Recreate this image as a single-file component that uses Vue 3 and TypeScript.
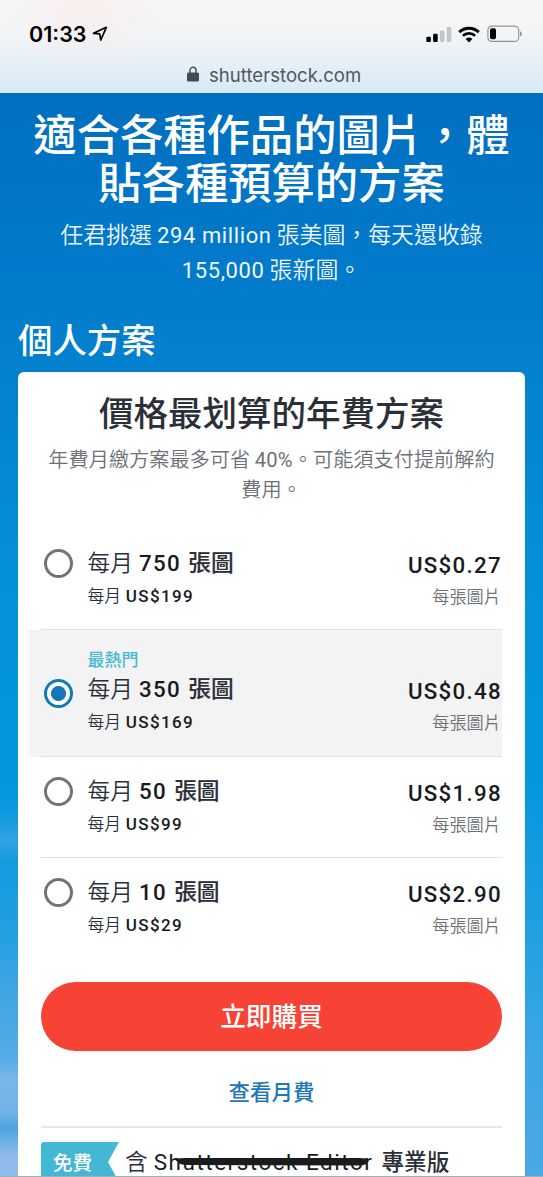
<script setup lang="ts">
interface Plan {
  images: string
  monthly: string
  perImage: string
  popular?: boolean
}

const plans: Plan[] = [
  { images: '750', monthly: 'US$199', perImage: 'US$0.27' },
  { images: '350', monthly: 'US$169', perImage: 'US$0.48', popular: true },
  { images: '50', monthly: 'US$99', perImage: 'US$1.98' },
  { images: '10', monthly: 'US$29', perImage: 'US$2.90' },
]
</script>

<template>
  <div class="screen">
    <header class="browser">
      <div class="status">
        <span class="clock">01:33</span>
        <svg class="location" width="16" height="16" viewBox="0 0 16 16">
          <path d="M1.500 7.300 14.300 1.300 8.800 14 7.700 7.800Z" fill="none" stroke="#000" stroke-width="1.7" stroke-linejoin="round" />
        </svg>
        <svg class="signal" width="26" height="17" viewBox="0 0 26 17">
          <rect x="0.3" y="10.7" width="4.6" height="5.3" rx="1.2" />
          <rect x="7.1" y="7.8" width="4.6" height="8.2" rx="1.2" />
          <rect x="13.9" y="4.4" width="4.6" height="11.6" rx="1.2" fill="#c3c6c8" />
          <rect x="20.7" y="1" width="4.6" height="15" rx="1.2" fill="#c3c6c8" />
        </svg>
        <svg class="wifi" width="22" height="17" viewBox="0 0 22 17">
          <path d="M1.2 6.1a14.2 14.2 0 0 1 19.6 0" fill="none" stroke="#000" stroke-width="3" />
          <path d="M4.9 9.7a9 9 0 0 1 12.2 0" fill="none" stroke="#000" stroke-width="2.7" />
          <path d="M7.6 12.9a5.2 5.2 0 0 1 6.8 0L11 16.4Z" />
        </svg>
        <svg class="battery" width="36" height="18" viewBox="0 0 36 18">
          <rect x="0.9" y="1.2" width="30.8" height="15.2" rx="4" fill="none" stroke="#929699" stroke-width="1.2" />
          <path d="M33 6.2c2.4.9 2.4 4.4 0 5.3Z" fill="#929699" />
          <rect x="3" y="3.3" width="6" height="11" rx="2" />
        </svg>
      </div>
      <div class="address">
        <svg width="12" height="16" viewBox="0 0 12 16">
          <path d="M3 7.500V4.300a3 3 0 0 1 6 0V7.500" fill="none" stroke="#454a4d" stroke-width="1.4" />
          <rect x="0" y="6.500" width="12" height="9" rx="1.6" fill="#454a4d" />
        </svg>
        <span>shutterstock.com</span>
      </div>
    </header>

    <main class="page">
      <h1>適合各種作品的圖片，體<br />貼各種預算的方案</h1>
      <p class="intro">任君挑選 <span class="din">294 million</span> 張美圖，每天還收錄<br /><span class="din">155,000</span> 張新圖。</p>
      <h2>個人方案</h2>

      <section class="card">
        <h3>價格最划算的年費方案</h3>
        <p class="note">年費月繳方案最多可省 <span class="din">40%</span>。可能須支付提前解約<br />費用。</p>

        <ul class="plans">
          <li v-for="plan in plans" :key="plan.images" :class="{ popular: plan.popular }">
            <span class="radio"></span>
            <div class="left">
              <div v-if="plan.popular" class="tag">最熱門</div>
              <div class="name">每月 <b class="num">{{ plan.images }}</b> <b class="han">張圖</b></div>
              <div class="monthly">每月 <b>{{ plan.monthly }}</b></div>
            </div>
            <div class="right">
              <div class="price">{{ plan.perImage }}</div>
              <div class="unit">每張圖片</div>
            </div>
          </li>
        </ul>

        <button class="buy">立即購買</button>
        <a class="link">查看月費</a>

        <div class="bonus">
          <div class="ribbon">免費</div>
          <div class="bonus-text">
            含 <span class="product">Shutterstock Editor<svg class="stroke" width="198" height="10" viewBox="0 0 198 10"><path d="M0 2Q8 .6 18 1.100L185 1q9 0 10 2-1 5-9 5.500L14 8Q5 8 4 5Z" fill="#191b1c" /></svg></span> <b class="han">專業版</b>
          </div>
        </div>
      </section>
    </main>
  </div>
</template>

<style>
body {
  margin: 0;
}
</style>

<style scoped>
.screen {
  position: relative;
  width: 543px;
  height: 1177px;
  overflow: hidden;
  font-family: "Noto Sans CJK TC", sans-serif;
  color: #2b2f38;
}
.screen::after {
  content: "";
  position: absolute;
  inset: auto 0 0;
  height: 1px;
  background: #a9adb0;
}
h1, h2, h3, p, ul {
  margin: 0;
  padding: 0;
  list-style: none;
}
.browser {
  box-sizing: border-box;
  height: 93px;
  padding-top: 20px;
  background:
    radial-gradient(circle at 85px 0, rgba(255, 225, 225, 0.4), transparent 80px),
    linear-gradient(#f6f6f6 0, #f2f4f6 40%, #d7eaf7 100%);
}
.status {
  display: flex;
  align-items: center;
  height: 28px;
  padding: 0 20px 0 29px;
}
.clock {
  width: 63px;
  font: 600 21.500px/28px Inter, sans-serif;
  color: #000;
}
.location {
  margin-right: auto;
}
.signal {
  margin-right: 6px;
}
.wifi {
  margin-right: 7px;
}
.address {
  display: flex;
  align-items: center;
  height: 26px;
  margin-top: 14px;
  padding-left: 187px;
  gap: 10px;
  font: 400 18.6px/26px Inter, sans-serif;
  color: #51585c;
}
.address svg {
  margin-top: -2px;
}
.page {
  height: 1084px;
  padding-top: 15px;
  background:
    linear-gradient(transparent 66%, rgba(95, 175, 230, 0.4) 69%, transparent 71%, transparent 78%, #3fa5e2 83%, #55abe4 89%, #7ab6e8 91%, #72b3e7 94%, #4ca3e1 95.500%, #8fbcea 98%, #8fbcea 100%) 0 0 / 18px 100% no-repeat,
    linear-gradient(#026fc0 0, #0279ca 15%, #0383d0 28%, #0490d9 43%, #0497de 63%, #1c9ee2 75%, #3ba6e4 88%, #4aa8e4 100%);
  box-sizing: border-box;
}
h1 {
  font-size: 43.3px;
  line-height: 48px;
  font-weight: 500;
  text-align: center;
  color: #fff;
  white-space: nowrap;
}
.din {
  font-family: Roboto, sans-serif;
  font-weight: 400;
  line-height: 1;
}
.intro {
  margin-top: 12px;
  font-size: 22.900px;
  line-height: 35px;
  font-weight: 350;
  text-align: center;
  color: #eef7fd;
  white-space: nowrap;
}
.intro .din {
  font-size: 22px;
  letter-spacing: 0.6px;
}
h2 {
  margin: 29px 0 0 18px;
  font-size: 34.4px;
  line-height: 46px;
  font-weight: 500;
  color: #fff;
}
.card {
  box-sizing: border-box;
  width: 507px;
  height: 830px;
  margin: 11px 0 0 18px;
  padding: 16px 23px 0;
  border-radius: 6px;
  background: #fff;
}
h3 {
  font-size: 34.5px;
  line-height: 46px;
  font-weight: 500;
  text-align: center;
  white-space: nowrap;
}
.note {
  margin-top: 10px;
  font-size: 20.2px;
  line-height: 30px;
  font-weight: 350;
  text-align: center;
  color: #6d7177;
  white-space: nowrap;
}
.note .din {
  letter-spacing: 0.2px;
}
.plans {
  margin-top: 25px;
}
.plans li {
  box-sizing: border-box;
  display: flex;
  height: 101px;
  padding: 17px 1px 0 3px;
  border-bottom: 1.5px solid #dfe1e3;
}
.plans li:last-child {
  border-bottom-color: transparent;
}
.plans li.popular {
  height: 127px;
  margin-left: -12px;
  padding-left: 15px;
  border-bottom: 0;
  background:
    linear-gradient(#dfe1e3, #dfe1e3) 12px 100% / 461px 1px no-repeat,
    #f3f3f3;
}
.radio {
  box-sizing: border-box;
  width: 29px;
  height: 29px;
  margin-top: 3px;
  border: 3px solid #707378;
  border-radius: 50%;
  background: #fff;
}
.popular .radio {
  margin-top: 32px;
  border: 3px solid #1278b8;
  background: radial-gradient(circle, #1278b8 7px, #fff 8px);
}
.left {
  margin: -1px 0 0 14.500px;
}
.popular .left {
  margin-top: -2px;
}
.tag {
  height: 26px;
  font-size: 17px;
  line-height: 27px;
  font-weight: 500;
  color: #45b9d3;
}
.name {
  height: 34px;
  font-size: 22.700px;
  line-height: 34px;
  font-weight: 350;
  white-space: nowrap;
}
.num {
  margin: 0 2px 0 1px;
  font-family: Roboto, sans-serif;
  font-weight: 500;
  font-size: 22.300px;
  line-height: 1;
  letter-spacing: 1.4px;
  color: #171b22;
}
.han {
  font-weight: 500;
}
.name .han {
  -webkit-text-stroke: 0.2px currentColor;
}
.monthly {
  height: 32px;
  font-size: 16.800px;
  line-height: 33px;
  font-weight: 350;
  white-space: nowrap;
}
.monthly b {
  margin-left: 1px;
  font-family: Roboto, sans-serif;
  font-weight: 500;
  font-size: 17px;
  line-height: 1;
  letter-spacing: 1.35px;
  color: #171b22;
}
.right {
  margin-left: auto;
  text-align: right;
}
.price {
  height: 36px;
  margin-right: -1px;
  font: 500 22.300px/38px Roboto, sans-serif;
  letter-spacing: 1.3px;
  color: #171b22;
}
.unit {
  font-size: 17.2px;
  line-height: 27px;
  font-weight: 350;
  color: #6d7177;
}
.popular .right {
  padding-top: 25px;
}
.buy {
  display: block;
  width: 461px;
  height: 69px;
  margin: 23px 0 0;
  padding: 0 0 3px;
  border: 0;
  border-radius: 35px;
  background: #f74336;
  font: 500 25.700px/62px "Noto Sans CJK TC", sans-serif;
  color: #fff;
}
.link {
  display: block;
  height: 75px;
  font-size: 21.500px;
  line-height: 79px;
  font-weight: 500;
  text-align: center;
  color: #1d78b4;
}
.bonus {
  display: flex;
  padding-top: 14px;
  border-top: 2px solid #e6e7e9;
}
.ribbon {
  box-sizing: border-box;
  width: 78px;
  height: 40px;
  padding-left: 12px;
  border-radius: 3px 0 0 3px;
  clip-path: polygon(0 0, 100% 0, 67px 50%, 100% 100%, 0 100%);
  background: #42b8d4;
  font-size: 19.600px;
  line-height: 39px;
  font-weight: 500;
  color: #fff;
}
.bonus-text {
  margin-left: 6px;
  font-size: 22.700px;
  line-height: 37px;
  font-weight: 350;
  white-space: nowrap;
}
.product {
  position: relative;
  margin: 0 3px 0 1px;
  font-family: Roboto, sans-serif;
  font-weight: 400;
  font-size: 22.500px;
  line-height: 1;
  letter-spacing: 1.5px;
  color: #171b22;
}
.stroke {
  position: absolute;
  left: 20px;
  top: 8px;
}
</style>
